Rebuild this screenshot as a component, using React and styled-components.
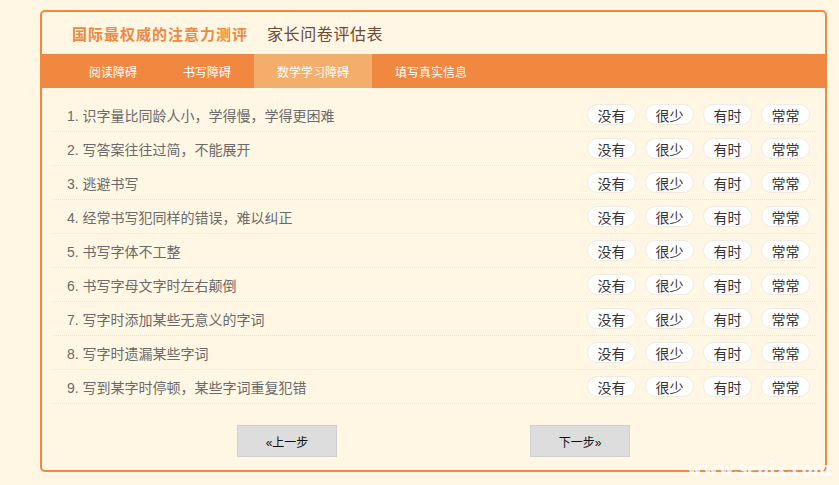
import styled, { createGlobalStyle } from "styled-components";

const GlobalStyle = createGlobalStyle`
    html, body {
        margin: 0;
        padding: 0;
        background-color: #fff7e4;
        font-family: "Liberation Sans", "Noto Sans CJK SC", sans-serif;
    }
`

const tabs = ['阅读障碍', '书写障碍', '数学学习障碍', '填写真实信息'];

const questions = [
    '识字量比同龄人小，学得慢，学得更困难',
    '写答案往往过简，不能展开',
    '逃避书写',
    '经常书写犯同样的错误，难以纠正',
    '书写字体不工整',
    '书写字母文字时左右颠倒',
    '写字时添加某些无意义的字词',
    '写字时遗漏某些字词',
    '写到某字时停顿，某些字词重复犯错'
];

const options = ['没有', '很少', '有时', '常常'];

export default function App(){
    return(
        <>
            <GlobalStyle />
            <SCPage>
                <SCCard>
                    <SCHeader>
                        <SCBrand>国际最权威的注意力测评</SCBrand>
                        <SCTitle>家长问卷评估表</SCTitle>
                    </SCHeader>
                    <SCNav>
                        {tabs.map((t, i) => (
                            <SCTab key={i} active={i === 2}>{t}</SCTab>
                        ))}
                    </SCNav>
                    <SCList>
                        {questions.map((q, i) => (
                            <SCRow key={i}>
                                <SCQuestion>{i + 1}. {q}</SCQuestion>
                                <SCOptions>
                                    {options.map((o) => (
                                        <SCOption key={o}>{o}</SCOption>
                                    ))}
                                </SCOptions>
                            </SCRow>
                        ))}
                    </SCList>
                    <SCSteps>
                        <SCStep>«上一步</SCStep>
                        <SCStep>下一步»</SCStep>
                    </SCSteps>
                </SCCard>
                <SCWatermark>www.senix.com</SCWatermark>
            </SCPage>
        </>
    );
}

const SCPage = styled.div`
    width: 839px;
    height: 485px;
    padding: 10px 0 0 40px;
    box-sizing: border-box;
    position: relative;
    overflow: hidden;
`

const SCCard = styled.div`
    width: 787px;
    box-sizing: border-box;

    border: 2px solid #f0883f;
    border-radius: 5px;

    background-color: #fff7e4;

    padding-bottom: 13px;
`

const SCHeader = styled.div`
    height: 42px;

    display: flex;
    align-items: center;

    padding-left: 30px;
`

const SCBrand = styled.span`
    color: #f0883f;

    font-size: 15px;
    font-weight: 700;
    letter-spacing: 1px;

    margin-right: 19px;
`

const SCTitle = styled.span`
    color: #6b4a36;

    font-size: 16px;
    letter-spacing: 0.6px;
`

const SCNav = styled.div`
    height: 34px;

    display: flex;

    padding-left: 24px;

    background-color: #f0883f;
`

const SCTab = styled.div`
    padding: 0 23px;

    display: flex;
    align-items: center;

    color: white;
    font-size: 12px;

    background-color: ${props => props.active ? '#f4ae6c' : 'transparent'};
`

const SCList = styled.div`
    margin: 10px 10px 0 10px;
`

const SCRow = styled.div`
    height: 33px;

    display: flex;
    align-items: center;
    justify-content: space-between;

    padding: 0 5px 0 15px;

    border-bottom: 1px dotted #ebe2cf;
`

const SCQuestion = styled.span`
    color: #6a6a6a;
    font-size: 14px;
`

const SCOptions = styled.div`
    display: flex;
    gap: 9px;
`

const SCOption = styled.span`
    width: 49px;
    height: 21px;
    box-sizing: border-box;

    display: flex;
    align-items: center;
    justify-content: center;

    border: 1px solid #f0ebe2;
    border-radius: 11px;

    background-color: white;

    color: #333333;
    font-size: 14px;
`

const SCSteps = styled.div`
    display: flex;
    justify-content: center;
    gap: 193px;

    margin-top: 21px;
`

const SCStep = styled.button`
    width: 100px;
    height: 32px;

    border: 1px solid #cfcfcf;
    background-color: #dddddd;

    color: #111111;
    font-family: "Liberation Sans", "Noto Sans CJK SC", sans-serif;
    font-size: 12px;

    padding: 0;
`

const SCWatermark = styled.div`
    position: absolute;
    right: 8px;
    bottom: 4px;

    color: white;
    font-family: "Liberation Serif", serif;
    font-size: 22px;
    font-weight: 700;
    opacity: 0.85;
`
